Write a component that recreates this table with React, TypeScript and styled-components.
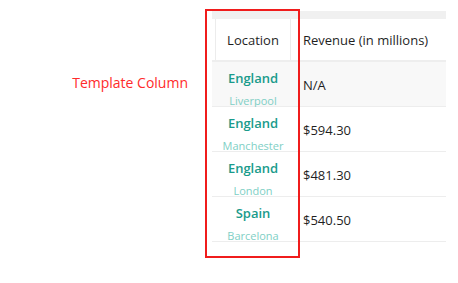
import React from 'react';
import styled, { createGlobalStyle } from 'styled-components';

const GlobalStyle = createGlobalStyle`
  html, body {
    margin: 0;
    padding: 0;
    background: #ffffff;
  }
  body {
    font-family: "Open Sans", "Noto Sans", sans-serif;
    color: #222222;
  }
`;

type City = { country: string; city: string; revenue: string };

const rows: City[] = [
  { country: 'England', city: 'Liverpool', revenue: 'N/A' },
  { country: 'England', city: 'Manchester', revenue: '$594.30' },
  { country: 'England', city: 'London', revenue: '$481.30' },
  { country: 'Spain', city: 'Barcelona', revenue: '$540.50' },
];

export default function App() {
  return (
    <>
      <GlobalStyle />
      <Page>
        <Caption>Template Column</Caption>
        <GridWrap>
          <Grid>
            <TopBar />
            <HeaderRow>
              <Gutter />
              <HeaderCell $bordered>Location</HeaderCell>
              <HeaderCell>Revenue (in millions)</HeaderCell>
            </HeaderRow>
            {rows.map((r, i) => (
              <Row key={r.city} $active={i === 0}>
                <Gutter />
                <LocationCell>
                  <Country>{r.country}</Country>
                  <CityName>{r.city}</CityName>
                </LocationCell>
                <ValueCell>{r.revenue}</ValueCell>
              </Row>
            ))}
          </Grid>
          <Highlight />
        </GridWrap>
      </Page>
    </>
  );
}

const Page = styled.div`
  display: flex;
  padding-top: 11px;
  height: 283px;
  box-sizing: border-box;
`;

const Caption = styled.div`
  width: 212px;
  box-sizing: border-box;
  padding: 62px 24px 0 0;
  text-align: right;
  font-size: 14px;
  line-height: 20px;
  color: #ff2b2b;
`;

const GridWrap = styled.div`
  position: relative;
  width: 234px;
`;

const Grid = styled.div`
  display: flex;
  flex-direction: column;
`;

const TopBar = styled.div`
  height: 8px;
  background: #f0f0f0;
`;

const HeaderRow = styled.div`
  display: grid;
  grid-template-columns: 3px 76px 1fr;
  height: 41px;
  border-bottom: 2px solid #eeeeee;
`;

const Gutter = styled.div``;

const HeaderCell = styled.div<{ $bordered?: boolean }>`
  display: flex;
  align-items: center;
  justify-content: ${(p) => (p.$bordered ? 'center' : 'flex-start')};
  padding-left: ${(p) => (p.$bordered ? '0' : '12px')};
  border-left: ${(p) => (p.$bordered ? '1px solid #ececec' : 'none')};
  border-right: ${(p) => (p.$bordered ? '1px solid #ececec' : 'none')};
  font-size: 13px;
  color: #1f1f1f;
`;

const Row = styled.div<{ $active?: boolean }>`
  display: grid;
  grid-template-columns: 4px 74px 1fr;
  height: 44px;
  border-bottom: 1px solid #ededed;
  background: ${(p) => (p.$active ? '#f8f8f8' : '#ffffff')};
`;

const LocationCell = styled.div`
  display: flex;
  flex-direction: column;
  align-items: center;
  padding-top: 6px;
  overflow: visible;
`;

const Country = styled.div`
  font-size: 13px;
  font-weight: 600;
  line-height: 20px;
  color: #1a9b8b;
`;

const CityName = styled.div`
  margin-top: 6px;
  font-size: 11px;
  line-height: 14px;
  color: #80cfc5;
`;

const ValueCell = styled.div`
  display: flex;
  align-items: center;
  padding-left: 13px;
  font-size: 13px;
  color: #1f1f1f;
`;

const Highlight = styled.div`
  position: absolute;
  left: -7px;
  top: -2px;
  width: 95px;
  height: 249px;
  box-sizing: border-box;
  border: 2px solid #f01c1c;
  pointer-events: none;
`;
